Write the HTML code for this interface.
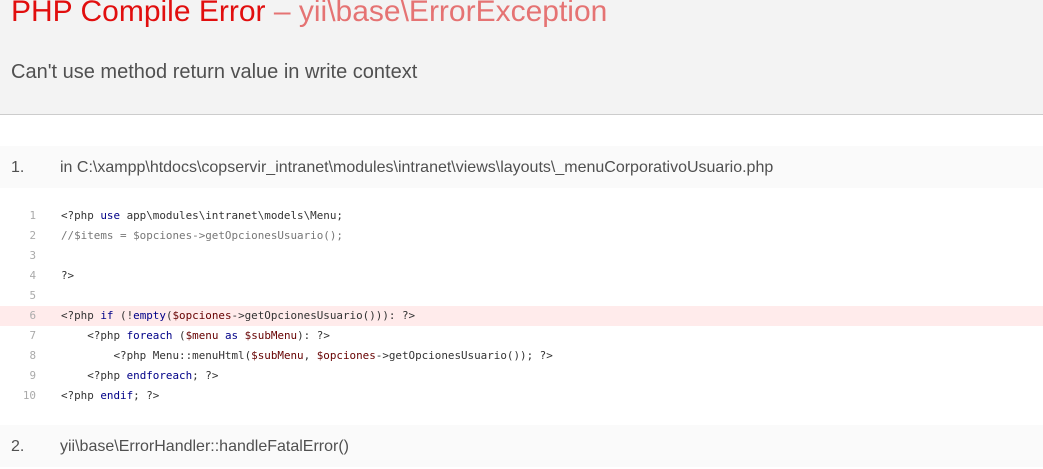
<html><head><style>
body{margin:0;width:1043px;height:469px;overflow:hidden;background:#fff;font-family:"Liberation Sans",Arial,sans-serif;position:relative}
.hdr{position:absolute;left:0;top:0;width:1043px;height:114px;background:#f3f3f3;border-bottom:1px solid #ccc}
h1{position:absolute;left:11px;top:-5px;margin:0;font-weight:normal;font-size:30px;color:#e10e0e;white-space:nowrap}
h1 span{color:#e57373}
h2{position:absolute;left:11px;top:61px;margin:0;font-weight:normal;font-size:20px;color:#505050;white-space:nowrap}
.item{position:absolute;left:0;width:1043px;height:42px;background:#fafafa;font-size:16px;color:#505050}
.item .n{position:absolute;left:11px;top:13px}
.item .t{position:absolute;left:60px;top:13px;white-space:nowrap}
.code{position:absolute;left:0;top:206px;width:1043px;font-family:"DejaVu Sans Mono","Liberation Mono",monospace;font-size:10.9px;color:#333}
.l{height:20px;line-height:20px;position:relative;white-space:pre}
.l.h{background:#ffebeb}
.l b{position:absolute;left:0;width:36px;text-align:right;font-weight:normal;color:#aaa}
.l i{font-style:normal;position:absolute;left:61px}
.k{color:#000088}.v{color:#660000}.c{color:#777;font-style:italic}
</style></head><body>
<div class="hdr"><h1>PHP Compile Error <span>– yii\base\ErrorException</span></h1><h2>Can't use method return value in write context</h2></div>
<div class="item" style="top:146px"><span class="n">1.</span><span class="t">in C:\xampp\htdocs\copservir_intranet\modules\intranet\views\layouts\_menuCorporativoUsuario.php</span></div>
<div class="code">
<div class="l"><b>1</b><i>&lt;?php <span class="k">use</span> app\modules\intranet\models\Menu;</i></div>
<div class="l"><b>2</b><i class="c">//$items = $opciones-&gt;getOpcionesUsuario();</i></div>
<div class="l"><b>3</b><i></i></div>
<div class="l"><b>4</b><i>?&gt;</i></div>
<div class="l"><b>5</b><i></i></div>
<div class="l h"><b>6</b><i>&lt;?php <span class="k">if</span> (!<span class="k">empty</span>(<span class="v">$opciones</span>-&gt;getOpcionesUsuario())): ?&gt;</i></div>
<div class="l"><b>7</b><i>    &lt;?php <span class="k">foreach</span> (<span class="v">$menu</span> <span class="k">as</span> <span class="v">$subMenu</span>): ?&gt;</i></div>
<div class="l"><b>8</b><i>        &lt;?php Menu::menuHtml(<span class="v">$subMenu</span>, <span class="v">$opciones</span>-&gt;getOpcionesUsuario()); ?&gt;</i></div>
<div class="l"><b>9</b><i>    &lt;?php <span class="k">endforeach</span>; ?&gt;</i></div>
<div class="l"><b>10</b><i>&lt;?php <span class="k">endif</span>; ?&gt;</i></div>
</div>
<div class="item" style="top:425px"><span class="n">2.</span><span class="t">yii\base\ErrorHandler::handleFatalError()</span></div>
</body></html>
